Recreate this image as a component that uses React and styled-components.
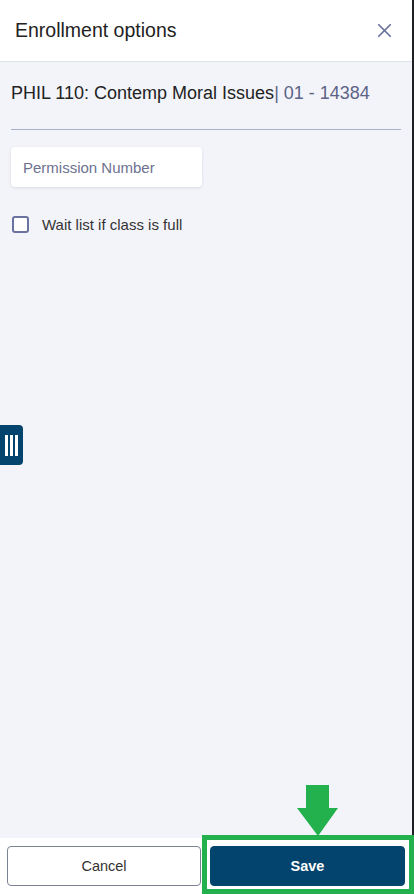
import React from "react";
import styled, { createGlobalStyle } from "styled-components";
import { X } from "lucide-react";

const navy = "#03446e";

const GlobalStyle = createGlobalStyle`
	html, body {
		margin: 0;
		padding: 0;
		height: 100%;
	}
	body {
		background: #1f2024;
		font-family: "Liberation Sans", Arial, sans-serif;
	}
	* {
		box-sizing: border-box;
	}
`;

const Drawer = styled.div`
	position: relative;
	width: 412px;
	height: 894px;
	display: flex;
	flex-direction: column;
	background: #f3f4f9;
`;

const Header = styled.div`
	height: 62px;
	flex-shrink: 0;
	display: flex;
	align-items: center;
	justify-content: space-between;
	padding: 0 16px 0 15px;
	background: #fff;
	border-bottom: 1px solid #e1e3ea;
`;

const Title = styled.h2`
	margin: 0;
	font-size: 19.5px;
	font-weight: 400;
	color: #222;
`;

const CloseButton = styled.button`
	display: flex;
	padding: 0;
	border: none;
	background: none;
	color: #6a729f;
	cursor: pointer;
`;

const Body = styled.div`
	flex: 1;
	padding: 20px 11px 0;
`;

const Course = styled.div`
	font-size: 18px;
	color: #222;
	line-height: 22px;
	padding-bottom: 25px;
	border-bottom: 1px solid #aab1cd;
`;

const Section = styled.span`
	color: #5b6386;
`;

const Input = styled.input`
	display: block;
	margin-top: 17px;
	width: 191px;
	height: 40px;
	padding: 0 12px;
	border: none;
	border-radius: 4px;
	background: #fff;
	box-shadow: 0 1px 3px rgba(30, 40, 80, 0.12);
	font-family: inherit;
	font-size: 15px;
	color: #222;
	&::placeholder {
		color: #6c7190;
	}
`;

const CheckRow = styled.label`
	display: flex;
	align-items: center;
	gap: 13px;
	margin-top: 29px;
	padding-left: 1px;
	font-size: 15px;
	color: #333;
	cursor: pointer;
`;

const Box = styled.span`
	flex-shrink: 0;
	width: 17px;
	height: 17px;
	border: 2px solid #6a729f;
	border-radius: 3px;
	background: #fff;
`;

const SideTab = styled.button`
	position: absolute;
	left: 0;
	top: 425px;
	width: 23px;
	height: 40px;
	display: flex;
	align-items: center;
	justify-content: center;
	gap: 2px;
	padding: 0 1px 0 0;
	border: none;
	border-radius: 0 4px 4px 0;
	background: ${navy};
`;

const Bar = styled.span`
	width: 3px;
	height: 21px;
	background: #fff;
`;

const Footer = styled.div`
	height: 56px;
	flex-shrink: 0;
	display: grid;
	grid-template-columns: 194px 195px;
	justify-content: space-between;
	padding: 8px 7px;
	background: #fff;
`;

const Button = styled.button`
	height: 40px;
	border-radius: 4px;
	font-family: inherit;
	font-size: 14.5px;
	cursor: pointer;
	border: 1px solid ${p => (p.$primary ? navy : "#7b8292")};
	background: ${p => (p.$primary ? navy : "#fff")};
	color: ${p => (p.$primary ? "#fff" : "#333")};
	font-weight: ${p => (p.$primary ? 700 : 400)};
`;

const Highlight = styled.div`
	position: absolute;
	left: 202px;
	top: 835px;
	width: 212px;
	height: 59px;
	border: 5px solid #22b14c;
	pointer-events: none;
`;

const Arrow = styled.svg`
	position: absolute;
	left: 297px;
	top: 785px;
	pointer-events: none;
`;

export default function App() {
	return (
		<>
			<GlobalStyle />
			<Drawer>
				<Header>
					<Title>Enrollment options</Title>
					<CloseButton aria-label="Close">
						<X size={23} strokeWidth={1.8} />
					</CloseButton>
				</Header>
				<Body>
					<Course>
						PHIL 110: Contemp Moral Issues<Section>| 01 - 14384</Section>
					</Course>
					<Input placeholder="Permission Number" />
					<CheckRow>
						<Box />
						Wait list if class is full
					</CheckRow>
				</Body>
				<Footer>
					<Button>Cancel</Button>
					<Button $primary>Save</Button>
				</Footer>
				<SideTab aria-label="Toggle">
					<Bar />
					<Bar />
					<Bar />
				</SideTab>
			</Drawer>
			<Highlight />
			<Arrow width="42" height="52" viewBox="0 0 42 52">
				<path d="M9 0 H32 V23 H41 L21 51 L0 23 H9 Z" fill="#22b14c" />
			</Arrow>
		</>
	);
}
